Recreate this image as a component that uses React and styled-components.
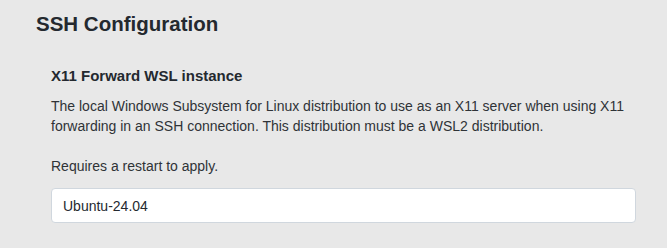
import React from "react";
import styled, { createGlobalStyle } from "styled-components";

const GlobalStyle = createGlobalStyle`
  html, body {
    margin: 0;
    background: #e8e8e8;
  }
  body {
    font-family: "Liberation Sans", Arial, sans-serif;
    color: #2b2f33;
  }
`;

const Page = styled.main`
  padding: 10px 31px 24px 36px;
`;

const Title = styled.h1`
  margin: 0;
  font-size: 20.5px;
  line-height: 28px;
  font-weight: 700;
  color: #24292f;
`;

const Setting = styled.section`
  display: flex;
  flex-direction: column;
  padding: 28px 0 0 15px;
`;

const SettingName = styled.h2`
  margin: 0 0 10px;
  font-size: 15px;
  line-height: 20px;
  font-weight: 700;
  color: #24292f;
`;

const Description = styled.p`
  margin: ${(p) => (p.$spaced ? "20px 0 0" : "0")};
  font-size: 14px;
  line-height: 20px;
  color: #2f3337;
`;

const TextInput = styled.input`
  box-sizing: border-box;
  width: 100%;
  height: 35px;
  margin-top: 12px;
  padding: 0 11px;
  border: 1px solid #d0d7de;
  border-radius: 4px;
  background: #ffffff;
  font-family: "Liberation Sans", Arial, sans-serif;
  font-size: 14px;
  color: #24292f;
  outline: none;
`;

export default function App() {
  return (
    <>
      <GlobalStyle />
      <Page>
        <Title>SSH Configuration</Title>
        <Setting>
          <SettingName>X11 Forward WSL instance</SettingName>
          <Description>
            The local Windows Subsystem for Linux distribution to use as an X11 server when using X11
            forwarding in an SSH connection. This distribution must be a WSL2 distribution.
          </Description>
          <Description $spaced>Requires a restart to apply.</Description>
          <TextInput type="text" defaultValue="Ubuntu-24.04" />
        </Setting>
      </Page>
    </>
  );
}
